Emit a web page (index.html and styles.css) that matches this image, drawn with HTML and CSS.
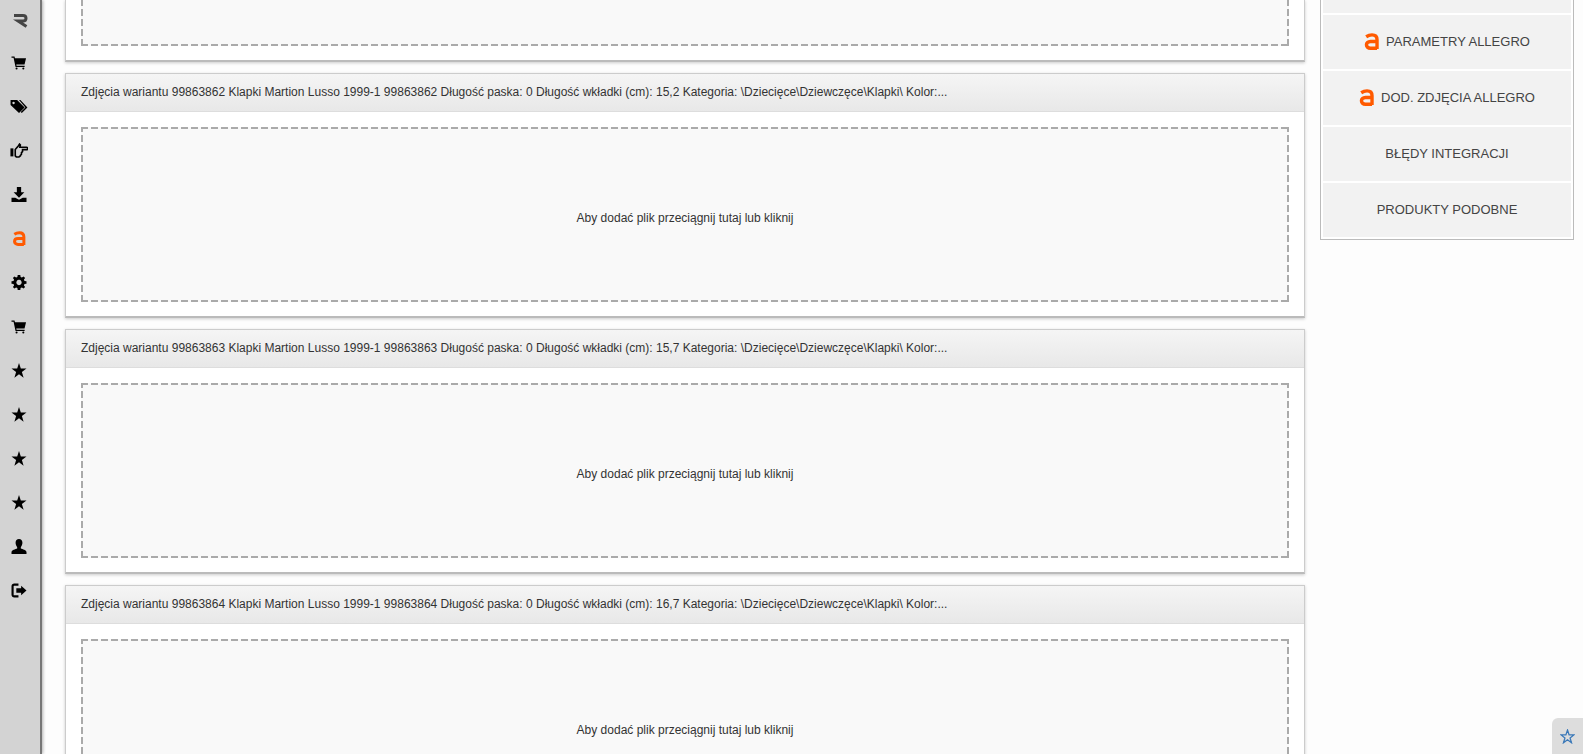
FILE: index.html
```html
<!DOCTYPE html>
<html lang="pl">
<head>
    <meta charset="UTF-8">
    <title>Zdjęcia wariantów</title>
    <link rel="stylesheet" href="styles.css">
</head>
<body>
    <svg class="defs" width="0" height="0">
        <symbol id="i-cart" viewBox="0 0 16 16"><path d="M0 1.500h3.200l.5 2h11.800l-1.600 6.600H5.100l.3 1.300h8.600v1.300H4.300L2.200 2.800H0z"/><circle cx="5.400" cy="14.300" r="1.100"/><circle cx="12.600" cy="14.300" r="1.100"/></symbol>
        <symbol id="i-tags" viewBox="0 0 18 16"><path d="M0 1h7l8 8-6 6-9-8.500zM3.200 2.900a1.300 1.300 0 1 0 .01 0z" fill-rule="evenodd"/><path d="M9 1h1.500L18 9l-6 6-1.200-1.200 5-4.800z"/></symbol>
        <symbol id="i-hand" viewBox="0 0 16 14"><path d="M4.500 6 7.500 2.500 8.500 1l.8.800-.5 2.200H15a1 1 0 0 1 0 2.200h-3.700V8l-1 1v1.500l-1 1v.5L8 13H5.500l-1-1z" fill="none" stroke="#000" stroke-width="1.500"/><path d="M0 5h2.800v7.500H0z"/></symbol>
        <symbol id="i-down" viewBox="0 0 14 14"><path d="M5 0h4v5h3L7 10 2 5h3zM0 10h3.500L7 12l3.500-2H14v4H0z"/></symbol>
        <symbol id="i-allegro" viewBox="0 0 14 16"><path d="M2 3.500C4 2.200 6 1.800 7.500 1.800c3 0 4.700 1.500 4.700 4.500V15M12.200 8H6C1 8 1 14.300 6 14.300h6.200" fill="none" stroke="#ff5a00" stroke-width="3.200"/></symbol>
        <symbol id="i-cog" viewBox="0 0 14 14"><path d="M5.800 0h2.400l.3 1.900 1.200.5L11.300 1.300 12.700 2.700l-1.100 1.600.5 1.200 1.900.3v2.400l-1.900.3-.5 1.200 1.100 1.600-1.400 1.400-1.600-1.100-1.200.5-.3 1.900H5.800l-.3-1.900-1.200-.5-1.600 1.100-1.400-1.400 1.100-1.600-.5-1.200L0 8.200V5.800l1.900-.3.5-1.200-1.100-1.600 1.400-1.400 1.600 1.100 1.200-.5zM7 4.500a2.500 2.500 0 1 0 .01 0z" fill-rule="evenodd"/></symbol>
        <symbol id="i-star" viewBox="0 0 14 14"><path d="M7 0l1.700 5.200H14L9.700 8.400l1.600 5.300L7 10.500l-4.300 3.200 1.600-5.300L0 5.200h5.300z"/></symbol>
        <symbol id="i-user" viewBox="0 0 14 14"><path d="M7 0c2 0 3.200 1.500 3.200 3.600 0 1.700-.8 3.200-1.500 4v1.200c1.500.8 5.300 1.300 5.300 3.400V14H0v-1.800c0-2.100 3.800-2.600 5.300-3.400V7.600c-.7-.8-1.500-2.300-1.500-4C3.800 1.500 5 0 7 0z"/></symbol>
        <symbol id="i-out" viewBox="0 0 14 14"><path d="M6.500 1.500H2.500A1.500 1.500 0 0 0 1 3v8a1.500 1.500 0 0 0 1.500 1.500h4" fill="none" stroke="#000" stroke-width="2"/><path d="M9 2.500 14 7l-5 4.500V9H4.500V5H9z"/></symbol>
    </svg>

    <!-- Menu boczne -->
    <nav class="sidebar">
        <svg class="logo" viewBox="0 0 15 15"><path d="M1 2.500h9c4 0 4 5.500 0 5.500H5l8.500 5.500" fill="none" stroke="#444" stroke-width="3"/></svg>
        <svg class="ico"><use href="#i-cart"/></svg>
        <svg class="ico"><use href="#i-tags"/></svg>
        <svg class="ico"><use href="#i-hand"/></svg>
        <svg class="ico"><use href="#i-down"/></svg>
        <svg class="ico"><use href="#i-allegro"/></svg>
        <svg class="ico"><use href="#i-cog"/></svg>
        <svg class="ico"><use href="#i-cart"/></svg>
        <svg class="ico"><use href="#i-star"/></svg>
        <svg class="ico"><use href="#i-star"/></svg>
        <svg class="ico"><use href="#i-star"/></svg>
        <svg class="ico"><use href="#i-star"/></svg>
        <svg class="ico"><use href="#i-user"/></svg>
        <svg class="ico"><use href="#i-out"/></svg>
    </nav>

    <main class="content">
        <section class="panel panel-cut">
            <div class="panel-body"><div class="dropzone dropzone-cut"></div></div>
        </section>

        <section class="panel">
            <div class="panel-head">Zdjęcia wariantu 99863862 Klapki Martion Lusso 1999-1 99863862 Długość paska: 0 Długość wkładki (cm): 15,2 Kategoria: \Dziecięce\Dziewczęce\Klapki\ Kolor:...</div>
            <div class="panel-body"><div class="dropzone">Aby dodać plik przeciągnij tutaj lub kliknij</div></div>
        </section>

        <section class="panel">
            <div class="panel-head">Zdjęcia wariantu 99863863 Klapki Martion Lusso 1999-1 99863863 Długość paska: 0 Długość wkładki (cm): 15,7 Kategoria: \Dziecięce\Dziewczęce\Klapki\ Kolor:...</div>
            <div class="panel-body"><div class="dropzone">Aby dodać plik przeciągnij tutaj lub kliknij</div></div>
        </section>

        <section class="panel">
            <div class="panel-head">Zdjęcia wariantu 99863864 Klapki Martion Lusso 1999-1 99863864 Długość paska: 0 Długość wkładki (cm): 16,7 Kategoria: \Dziecięce\Dziewczęce\Klapki\ Kolor:...</div>
            <div class="panel-body"><div class="dropzone">Aby dodać plik przeciągnij tutaj lub kliknij</div></div>
        </section>
    </main>

    <!-- Zakładki po prawej -->
    <aside class="tabs">
        <div class="tab tab-cut"></div>
        <div class="tab"><svg class="tab-ico"><use href="#i-allegro"/></svg>PARAMETRY ALLEGRO</div>
        <div class="tab"><svg class="tab-ico"><use href="#i-allegro"/></svg>DOD. ZDJĘCIA ALLEGRO</div>
        <div class="tab">BŁĘDY INTEGRACJI</div>
        <div class="tab">PRODUKTY PODOBNE</div>
    </aside>

    <div class="fav">
        <svg viewBox="0 0 14 14"><path d="M7 1l1.500 4.500H13L9.400 8.300l1.300 4.500L7 10.100l-3.700 2.700 1.300-4.500L1 5.500h4.500z" fill="none" stroke="#3a78b8" stroke-width="1.200"/></svg>
    </div>
</body>
</html>
```

FILE: styles.css
```css
html, body {
    height: 100%;
}

body {
    margin: 0;
    height: 754px;
    overflow: hidden;
    display: flex;
    align-items: flex-start;
    font-family: 'Liberation Sans', Arial, sans-serif;
    font-size: 12px;
    color: #333;
    background-color: #fdfdfd;
}

.defs {
    position: absolute;
}

.sidebar {
    flex: none;
    width: 40px;
    height: 754px;
    display: flex;
    flex-direction: column;
    align-items: center;
    background-color: #d3d3d3;
    border-right: 2px solid #777;
    box-shadow: 1px 0 3px rgba(0, 0, 0, 0.3);
}

.logo {
    flex: none;
    width: 15px;
    height: 15px;
    margin-top: 13px;
    margin-bottom: 27px;
}

.ico {
    flex: none;
    width: 18px;
    height: 15px;
    margin-bottom: 29px;
    margin-left: -2px;
}

.content {
    flex: none;
    width: 1240px;
    margin-left: 23px;
}

.panel {
    box-sizing: border-box;
    height: 245px;
    margin-bottom: 11px;
    background-color: #fff;
    border: 1px solid #ccc;
    border-bottom: 2px solid #bbb;
    box-shadow: 0 1px 3px rgba(0, 0, 0, 0.2);
}

.panel-cut {
    height: 62px;
    border-top: none;
}

.panel-head {
    box-sizing: border-box;
    height: 38px;
    padding: 0 15px;
    line-height: 36px;
    white-space: nowrap;
    background: linear-gradient(#f5f5f5, #e8e8e8);
    border-bottom: 1px solid #ddd;
}

.panel-body {
    padding: 15px;
}

.panel-cut .panel-body {
    padding-top: 0;
}

/* ramka rysowana tlem, kreska 7px / przerwa 3px */
.dropzone {
    box-sizing: border-box;
    height: 175px;
    padding-top: 6px;
    display: flex;
    align-items: center;
    justify-content: center;
    background-color: #f9f9f9;
    background-image:
        repeating-linear-gradient(90deg, #aaa 0 7px, transparent 7px 10px),
        repeating-linear-gradient(90deg, #aaa 0 7px, transparent 7px 10px),
        repeating-linear-gradient(0deg, #aaa 0 7px, transparent 7px 10px),
        repeating-linear-gradient(0deg, #aaa 0 7px, transparent 7px 10px);
    background-position: top, bottom, left, right;
    background-size: 100% 2px, 100% 2px, 2px 100%, 2px 100%;
    background-repeat: no-repeat;
}

.dropzone-cut {
    height: 46px;
    background-size: 0 0, 100% 2px, 2px 100%, 2px 100%;
}

.tabs {
    flex: none;
    box-sizing: border-box;
    width: 254px;
    margin-left: 15px;
    padding: 0 2px 2px;
    background-color: #fff;
    border: 1px solid #bbb;
    border-top: none;
    display: flex;
    flex-direction: column;
    gap: 2px;
}

.tab {
    box-sizing: border-box;
    height: 54px;
    padding-bottom: 2px;
    display: flex;
    align-items: center;
    justify-content: center;
    gap: 7px;
    font-size: 13px;
    background-color: #f2f2f2;
    color: #444;
}

.tab-cut {
    height: 13px;
    padding: 0;
}

.tab-ico {
    width: 15px;
    height: 17px;
}

.fav {
    position: fixed;
    right: 0;
    bottom: 0;
    width: 31px;
    height: 36px;
    background-color: #ddd;
    border-top-left-radius: 6px;
    display: flex;
    align-items: center;
    justify-content: center;
}

.fav svg {
    width: 15px;
    height: 15px;
}
```
